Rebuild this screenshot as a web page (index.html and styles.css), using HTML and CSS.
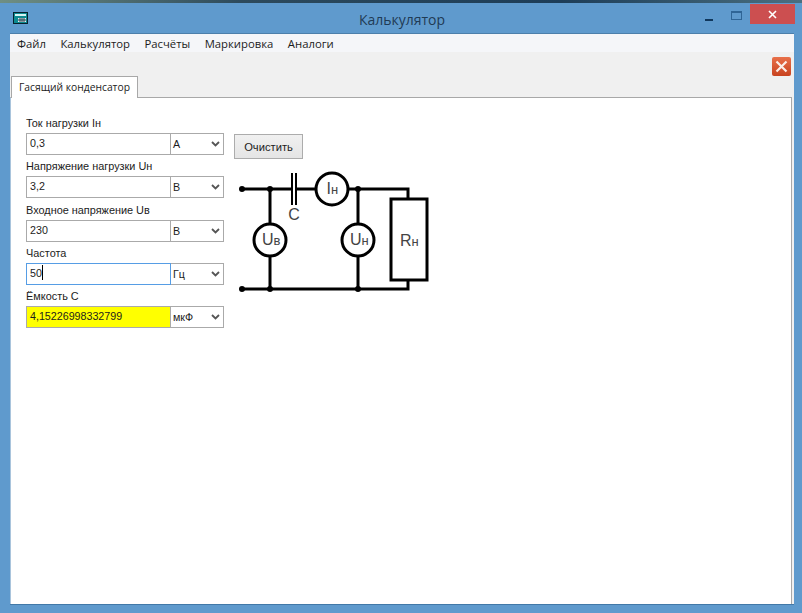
FILE: index.html
```html
<!DOCTYPE html>
<html lang="ru">
<head>
    <meta charset="UTF-8">
    <title>Калькулятор</title>
    <link rel="stylesheet" href="styles.css">
</head>
<body>
<div class="desktop-top"></div>
<div class="window">
    <!-- Заголовок окна -->
    <div class="titlebar">
        <svg class="app-icon" width="15" height="12" viewBox="0 0 15 12">
            <rect x="0.5" y="0.5" width="14" height="11" fill="#0c8a90" stroke="#06222e"/>
            <rect x="2" y="2" width="11" height="2" fill="#d8f4f4"/>
            <rect x="5" y="6" width="8" height="4" fill="#e8f0f4"/>
            <path d="M7 6v4M9 6v4M11 6v4M5 8h8" stroke="#26404c" stroke-width="1"/>
        </svg>
        <span class="title">Калькулятор</span>
        <div class="win-buttons">
            <div class="win-min"></div>
            <div class="win-max"></div>
            <div class="win-close">
                <svg width="9" height="9" viewBox="0 0 9 9"><path d="M1 1l7 7M8 1l-7 7" stroke="#fff" stroke-width="1.6"/></svg>
            </div>
        </div>
    </div>

    <div class="client">
        <div class="menu">
            <span>Файл</span>
            <span>Калькулятор</span>
            <span>Расчёты</span>
            <span>Маркировка</span>
            <span>Аналоги</span>
        </div>

        <div class="toolbar">
            <div class="close-tab">
                <svg width="13" height="13" viewBox="0 0 13 13"><path d="M1.5 1.5l10 10M11.5 1.5l-10 10" stroke="#fbeee8" stroke-width="2.2"/></svg>
            </div>
        </div>

        <div class="tabs">
            <div class="tab">Гасящий конденсатор</div>
        </div>

        <div class="page">
            <!-- Поля ввода -->
            <div class="form">
                <label class="field-label">Ток нагрузки Iн</label>
                <div class="field">
                    <div class="value">0,3</div>
                    <div class="unit"><span>А</span><svg class="chev" width="9" height="6" viewBox="0 0 9 6"><path d="M1 1l3.500 3.500 3.500-3.500" fill="none" stroke="#555" stroke-width="1.800"/></svg></div>
                </div>
                <label class="field-label">Напряжение нагрузки Uн</label>
                <div class="field">
                    <div class="value">3,2</div>
                    <div class="unit"><span>В</span><svg class="chev" width="9" height="6" viewBox="0 0 9 6"><path d="M1 1l3.500 3.500 3.500-3.500" fill="none" stroke="#555" stroke-width="1.800"/></svg></div>
                </div>
                <label class="field-label">Входное напряжение Uв</label>
                <div class="field">
                    <div class="value">230</div>
                    <div class="unit"><span>В</span><svg class="chev" width="9" height="6" viewBox="0 0 9 6"><path d="M1 1l3.500 3.500 3.500-3.500" fill="none" stroke="#555" stroke-width="1.800"/></svg></div>
                </div>
                <label class="field-label">Частота</label>
                <div class="field">
                    <div class="value value-focus">50<i class="caret"></i></div>
                    <div class="unit"><span>Гц</span><svg class="chev" width="9" height="6" viewBox="0 0 9 6"><path d="M1 1l3.500 3.500 3.500-3.500" fill="none" stroke="#555" stroke-width="1.800"/></svg></div>
                </div>
                <label class="field-label">Ёмкость С</label>
                <div class="field">
                    <div class="value value-result">4,15226998332799</div>
                    <div class="unit"><span>мкФ</span><svg class="chev" width="9" height="6" viewBox="0 0 9 6"><path d="M1 1l3.500 3.500 3.500-3.500" fill="none" stroke="#555" stroke-width="1.800"/></svg></div>
                </div>
            </div>

            <div class="side">
                <button class="clear-button">Очистить</button>
                <!-- Схема -->
                <svg class="scheme" width="200" height="130" viewBox="236 170 200 130">
                    <g fill="none" stroke="#000" stroke-width="3">
                        <path d="M242 189H292M296 189H316M348 189H408V199"/>
                        <path d="M242 289H408V280"/>
                        <path d="M270 189V224M270 256V289"/>
                        <path d="M358 189V224M358 256V289"/>
                        <path d="M292 173V205M296 173V205" stroke-width="2"/>
                        <rect x="391" y="199" width="36" height="81"/>
                        <circle cx="270" cy="240" r="16" fill="#fff"/>
                        <circle cx="358" cy="240" r="16" fill="#fff"/>
                        <circle cx="332" cy="189" r="16" fill="#fff"/>
                    </g>
                    <g fill="#000">
                        <circle cx="242" cy="189" r="3"/>
                        <circle cx="270" cy="189" r="3"/>
                        <circle cx="358" cy="189" r="3"/>
                        <circle cx="242" cy="289" r="3"/>
                        <circle cx="270" cy="289" r="3"/>
                        <circle cx="358" cy="289" r="3"/>
                    </g>
                    <g class="scheme-text">
                        <text x="294" y="220" text-anchor="middle">C</text>
                        <text x="262" y="245">U<tspan class="sub">в</tspan></text>
                        <text x="350" y="245">U<tspan class="sub">н</tspan></text>
                        <text x="326.500" y="194">I<tspan class="sub">н</tspan></text>
                        <text x="400" y="246">R<tspan class="sub">н</tspan></text>
                    </g>
                </svg>
            </div>
        </div>
    </div>
</div>
</body>
</html>
```

FILE: styles.css
```css
html, body {
    height: 100%;
    margin: 0;
    overflow: hidden;
    font-family: "Open Sans", Arial, sans-serif;
    font-size: 11px;
    color: #1c1c1c;
}

body {
    display: flex;
    flex-direction: column;
    background-color: #5f9acd;
}

.desktop-top {
    height: 3px;
    background: linear-gradient(90deg, #6f8f83, #2d4a5c 30%, #1d3d58 70%, #4a6f80);
}

.window {
    flex: 1;
    display: flex;
    flex-direction: column;
    min-height: 0;
    margin-left: 2px;
    padding: 0 8px 8px 8px;
    background-color: #5f9acd;
}

.titlebar {
    height: 30px;
    display: flex;
    align-items: flex-start;
    position: relative;
    flex-shrink: 0;
}

.app-icon {
    margin: 9px 0 0 3px;
}

.title {
    position: absolute;
    left: 0;
    right: 0;
    top: 7px;
    text-align: center;
    font-size: 14px;
    color: #1f3b55;
}

.win-buttons {
    position: absolute;
    top: 1px;
    right: -1px;
    display: flex;
    align-items: flex-start;
}

.win-min {
    width: 8px;
    height: 2px;
    margin: 15px 18px 0 0;
    background-color: #10375c;
}

.win-max {
    width: 9px;
    height: 6px;
    margin: 7px 8px 0 0;
    border: 1px solid #2f6596;
    border-top-width: 2px;
}

.win-close {
    width: 45px;
    height: 20px;
    background-color: #cc4f50;
    display: flex;
    align-items: center;
    justify-content: center;
}

.client {
    flex: 1;
    display: flex;
    flex-direction: column;
    min-height: 0;
    border-top: 1px solid #4c7fab;
    border-bottom: 1px solid #4279a8;
    background-color: #f0f0f0;
}

.menu {
    height: 18px;
    display: flex;
    align-items: center;
    gap: 14.5px;
    padding: 0 7px;
    background-color: #f5f6f9;
    font-size: 11.3px;
    flex-shrink: 0;
}

.toolbar {
    height: 24px;
    display: flex;
    justify-content: flex-end;
    align-items: flex-end;
    padding-right: 3px;
    flex-shrink: 0;
}

.close-tab {
    width: 19px;
    height: 19px;
    border-radius: 2px;
    background: linear-gradient(#e8704a, #c8431f);
    display: flex;
    align-items: center;
    justify-content: center;
}

.tabs {
    display: flex;
    height: 21px;
    padding-left: 1px;
    flex-shrink: 0;
}

.tab {
    padding: 0 7px 0 7px;
    height: 21px;
    line-height: 20px;
    font-size: 10.3px;
    background-color: #fff;
    border: 1px solid #a8a8a8;
    border-bottom: none;
    position: relative;
    z-index: 1;
}

.page {
    flex: 1;
    display: flex;
    min-height: 0;
    padding: 14px 0 0 15px;
    margin-right: 2px;
    background-color: #fff;
    border-top: 1px solid #a8a8a8;
    border-right: 1px solid #a8a8a8;
    border-left: 1px solid #a9c4dc;
    box-sizing: border-box;
    font-family: "Liberation Sans", Arial, sans-serif;
}

.form {
    width: 198px;
}

.field-label {
    display: block;
    height: 21px;
    line-height: 23px;
    font-size: 10.9px;
}

.field {
    display: flex;
    height: 22px;
    margin-bottom: 0.33px;
    font-size: 10.7px;
}

.value {
    width: 145px;
    box-sizing: border-box;
    border: 1px solid #aaa;
    padding-left: 3px;
    line-height: 19px;
}

.value-focus {
    border-color: #569de5;
}

.value-result {
    background-color: #ffff00;
}

.caret {
    display: inline-block;
    width: 1px;
    height: 15px;
    background-color: #000;
    vertical-align: -3px;
}

.unit {
    width: 53px;
    box-sizing: border-box;
    border: 1px solid #aaa;
    border-left: none;
    padding: 0 3px 0 2px;
    display: flex;
    align-items: center;
    justify-content: space-between;
}

.side {
    display: flex;
    flex-direction: column;
    align-items: flex-start;
    margin: 22px 0 0 10px;
}

.clear-button {
    width: 69px;
    height: 25px;
    padding: 0;
    border: 1px solid #acacac;
    background: linear-gradient(#f0f0f0, #e5e5e5);
    font-family: "Liberation Sans", Arial, sans-serif;
    font-size: 11.2px;
    color: #1c1c1c;
}

.scheme {
    margin: 11px 0 0 2px;
}

.scheme-text {
    font-family: "Liberation Sans", Arial, sans-serif;
    font-size: 16px;
    fill: #444;
}

.sub {
    font-size: 13px;
}
```
